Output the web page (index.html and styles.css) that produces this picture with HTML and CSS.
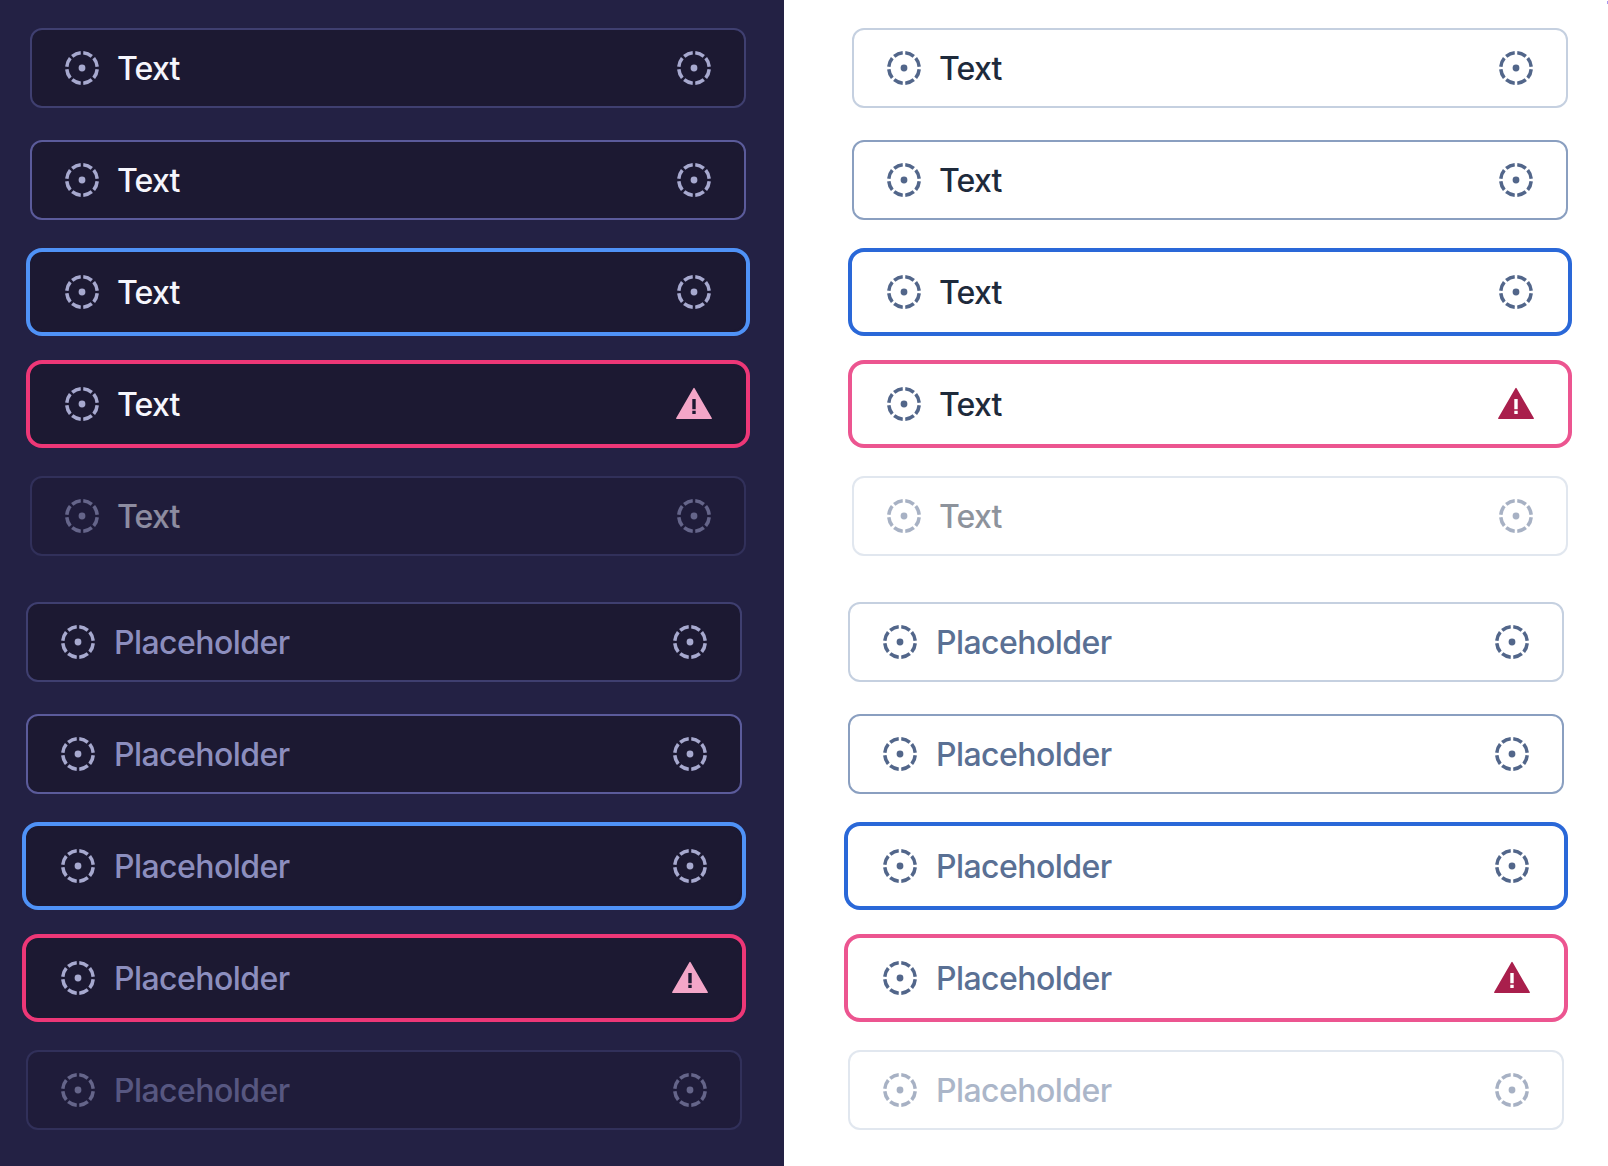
FILE: index.html
```html
<!DOCTYPE html>
<html lang="en">
<head>
<meta charset="utf-8">
<title>Text field states</title>
<link rel="stylesheet" href="styles.css">
</head>
<body>
<svg class="defs" aria-hidden="true">
  <symbol id="slot" viewBox="0 0 40 40">
    <circle cx="20" cy="20" r="3.4" fill="currentColor"/>
    <circle cx="20" cy="20" r="15.25" fill="none" stroke="currentColor" stroke-width="3.5" pathLength="360" stroke-dasharray="35 10" stroke-dashoffset="-5"/>
  </symbol>
  <symbol id="alert" viewBox="0 0 40 40">
    <path fill="currentColor" fill-rule="evenodd" d="M19.4 4.2Q20 3.2 20.6 4.2L37.8 34Q38.2 35 37.4 35H2.6Q1.8 35 2.2 34ZM18.3 15V25.3H21.7V15ZM18.3 26.8V30H21.7V26.8Z"/>
  </symbol>
</svg>
<main class="board" id="board"></main>
<script src="fields.js"></script>
</body>
</html>
```
FILE: styles.css
```css
* { box-sizing: border-box; }
body { margin: 0; background: #fff; }
.defs { display: none; }
.board {
  display: grid;
  grid-template-columns: 784px 1fr;
  height: 1166px;
  font-family: Inter, "Liberation Sans", sans-serif;
}
.panel {
  position: relative;
  display: flex;
  flex-direction: column;
  gap: 46px;
  padding-top: 28px;
}
.dark {
  padding-left: 26px;
  background: #232144;
  --surface: #1c1932;
  --border: #3f3f70;
  --border-hover: #5b5b9b;
  --focus: #4f92f7;
  --error: #ed3777;
  --icon: #a7a9cf;
  --alert: #f3a6c8;
  --text: #f6f6fc;
  --placeholder: #8c8ebe;
}
.light {
  padding-left: 64px;
  background: #fff;
  --surface: #fff;
  --border: #c5d0e0;
  --border-hover: #8a9fc0;
  --focus: #2a68d8;
  --error: #ec5590;
  --icon: #52668a;
  --alert: #a91f4c;
  --text: #1e2a3b;
  --placeholder: #5a7094;
}
.light::after {
  content: "";
  position: absolute;
  top: 1px;
  right: 0;
  width: 1px;
  height: 3px;
  background: #a79af0;
}
.group { display: flex; flex-direction: column; gap: 32px; }
.filled { padding-left: 4px; }
.field {
  display: flex;
  align-items: center;
  width: 716px;
  height: 80px;
  padding: 0 30px;
  border: 2px solid var(--border);
  border-radius: 12px;
  background: var(--surface);
}
.icon { width: 40px; height: 40px; color: var(--icon); flex: none; }
.label {
  flex: 1;
  margin-left: 15px;
  padding-top: 2px;
  font-size: 32px;
  line-height: 40px;
  font-weight: 500;
  color: var(--text);
  letter-spacing: -0.8px;
}
.empty .label { color: var(--placeholder); margin-left: 16px; letter-spacing: -0.55px; }
.hover { border-color: var(--border-hover); }
.focus { border-color: var(--surface); box-shadow: 0 0 0 4px var(--focus); }
.error { border-color: var(--surface); box-shadow: 0 0 0 4px var(--error); }
.error .icon:last-child { color: var(--alert); }
.disabled { opacity: .5; }
```
FILE: fields.js
```js
const states = ["default", "hover", "focus", "error", "disabled"];
const icon = (id) => `<svg class="icon"><use href="#${id}"/></svg>`;
const field = (state, label) =>
  `<div class="field ${state}">${icon("slot")}<span class="label">${label}</span>${icon(state === "error" ? "alert" : "slot")}</div>`;
const group = (kind, label) =>
  `<div class="group ${kind}">${states.map((s) => field(s, label)).join("")}</div>`;
document.getElementById("board").innerHTML = ["dark", "light"]
  .map((theme) => `<section class="panel ${theme}">${group("filled", "Text")}${group("empty", "Placeholder")}</section>`)
  .join("");
```
